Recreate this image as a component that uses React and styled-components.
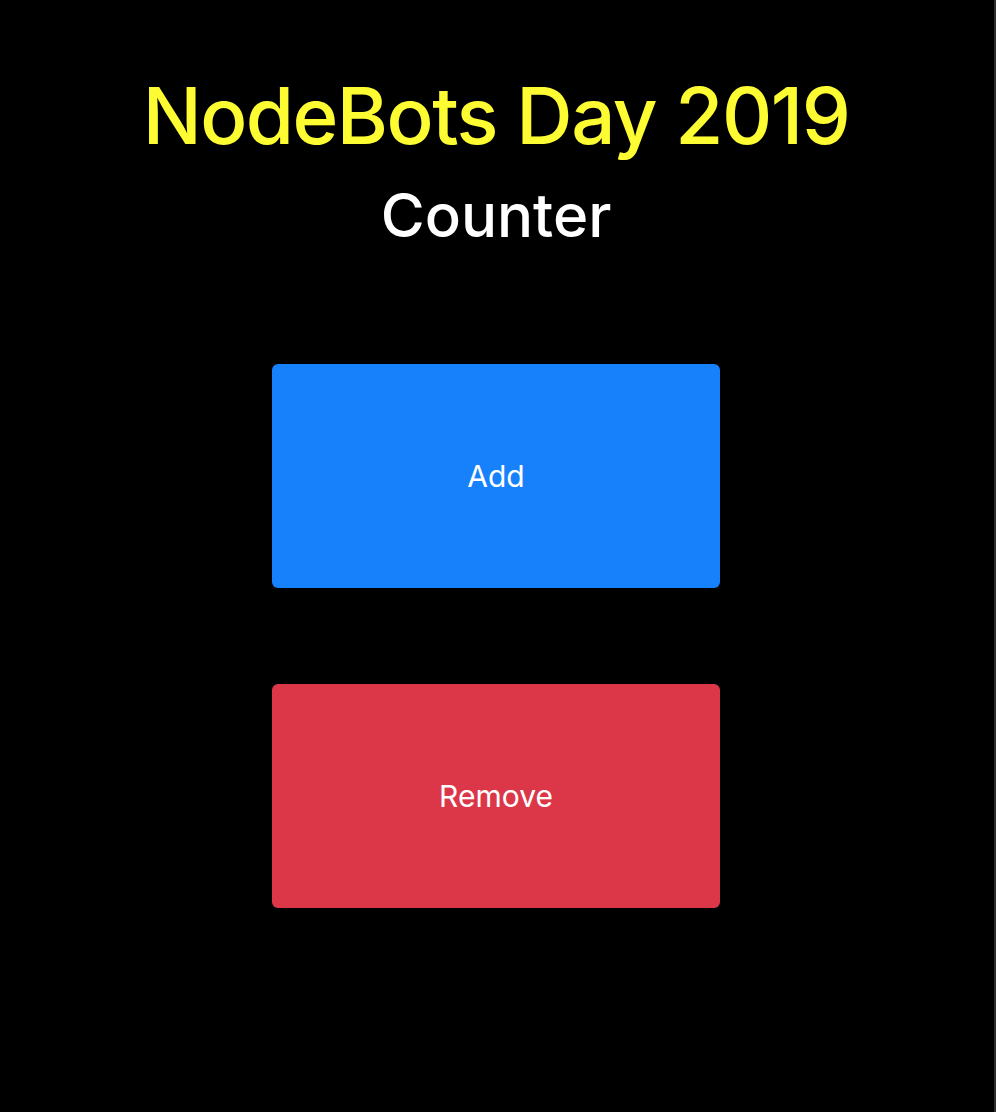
import React from 'react'
import styled, { createGlobalStyle } from 'styled-components'

const GlobalStyle = createGlobalStyle`
  html, body {
    margin: 0;
    padding: 0;
    background: #000;
  }
  body {
    font-family: Inter, "Noto Sans", sans-serif;
  }
`

const Page = styled.div`
  display: flex;
  flex-direction: column;
  align-items: center;
  min-height: 1112px;
  background: #000;
  padding-right: 2px;
  border-right: 2px solid #2e2e2e;
  box-sizing: border-box;
`

const Title = styled.h1`
  margin: 69px 0 0;
  font-size: 78px;
  font-weight: 500;
  line-height: 1.2;
  color: #fdfc33;
  letter-spacing: -1.5px;
`

const Subtitle = styled.h2`
  margin: 16px 0 0;
  font-size: 60px;
  font-weight: 500;
  line-height: 1.2;
  color: #fff;
`

const Buttons = styled.div`
  display: flex;
  flex-direction: column;
  gap: 96px;
  margin-top: 113px;
`

const Button = styled.button`
  width: 448px;
  height: 224px;
  border: 0;
  border-radius: 6px;
  background: ${p => p.color};
  color: #fff;
  font-family: inherit;
  font-size: 30px;
  font-weight: 400;
  cursor: pointer;
`

export default function App() {
  return (
    <>
      <GlobalStyle />
      <Page>
        <Title>NodeBots Day 2019</Title>
        <Subtitle>Counter</Subtitle>
        <Buttons>
          <Button color="#1780fb">Add</Button>
          <Button color="#db3749">Remove</Button>
        </Buttons>
      </Page>
    </>
  )
}
